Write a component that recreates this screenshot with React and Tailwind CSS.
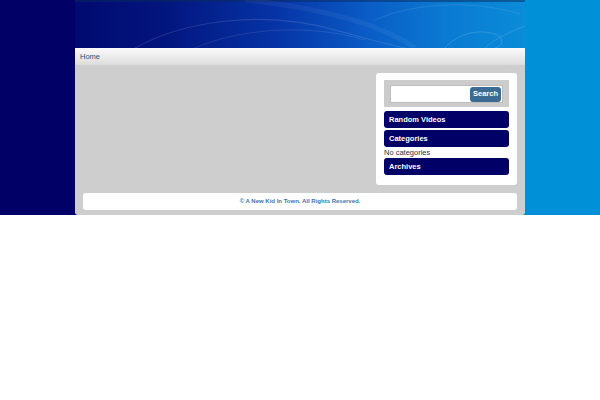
export default function App() {
  return (
    <div className="min-h-screen bg-white font-['Liberation_Sans',Arial,sans-serif]">
      <div className="flex bg-[linear-gradient(to_right,#000066_50%,#0090d8_50%)]">
        <div className="flex-1" />
        <div className="w-[450px] flex flex-col">
          {/* header banner */}
          <header className="relative h-[48px] overflow-hidden bg-[linear-gradient(to_right,#000a70_0%,#03157e_20%,#0634a6_45%,#0a5cc6_65%,#0a7ad2_82%,#0a8cd8_100%)]">
            <div className="absolute inset-x-0 top-0 h-[2px] bg-[#0a2a5a] opacity-50" />
            <svg className="absolute inset-0" width="450" height="48" viewBox="0 0 450 48" fill="none">
              <path d="M60 48 C110 20 190 10 260 30 C290 38 310 44 330 48" stroke="#ffffff" strokeOpacity="0.12" strokeWidth="1.2" />
              <path d="M120 48 C160 30 230 22 290 40" stroke="#ffffff" strokeOpacity="0.1" strokeWidth="1" />
              <path d="M170 0 C230 6 300 20 340 48" stroke="#ffffff" strokeOpacity="0.05" strokeWidth="5" />
              <path d="M300 20 C340 2 400 0 445 14" stroke="#ffffff" strokeOpacity="0.1" strokeWidth="1" />
              <path d="M370 48 C380 36 400 28 420 34 C430 38 428 46 420 48" stroke="#ffffff" strokeOpacity="0.15" strokeWidth="1" />
              <path d="M410 48 C420 38 440 30 450 26" stroke="#ffffff" strokeOpacity="0.12" strokeWidth="1" />
            </svg>
          </header>

          {/* nav */}
          <nav className="h-[17px] flex items-center px-[5px] bg-gradient-to-b from-[#fbfbfb] to-[#dcdcdc] text-[7.5px] text-[#2a4f78]">
            Home
          </nav>

          {/* content */}
          <div className="bg-[#cecece] rounded-b-[3px] px-2 pt-2 pb-[5px]">
            <div className="flex">
              <main className="flex-1" />
              <aside className="w-[141px] bg-white rounded-[3px] px-2 pt-[7px] pb-[10px]">
                <div className="h-[27px] bg-[#cccccc] pl-[6px] pr-[6px] pt-[5px]">
                  <div className="h-[18px] flex items-center bg-white border border-[#bdbdbd] pr-px">
                    <div className="flex-1" />
                    <button className="h-[15px] w-[31px] rounded-[3px] bg-[#3b6a92] text-white font-bold text-[7.5px] leading-none">
                      Search
                    </button>
                  </div>
                </div>
                <div className="mt-1 h-[17px] flex items-center pl-[5px] rounded-[3px] bg-[#000066] text-white font-bold text-[7.5px]">
                  Random Videos
                </div>
                <div className="mt-[2px] h-[17px] flex items-center pl-[5px] rounded-[3px] bg-[#000066] text-white font-bold text-[7.5px]">
                  Categories
                </div>
                <div className="h-[11px] flex items-center text-[7.5px] text-[#333]">No categories</div>
                <div className="h-[17px] flex items-center pl-[5px] rounded-[3px] bg-[#000066] text-white font-bold text-[7.5px]">
                  Archives
                </div>
              </aside>
            </div>
            <footer className="mt-2 h-[17px] flex items-center justify-center rounded-[3px] bg-white text-[6px] font-bold text-[#3a76b3]">
              © A New Kid In Town. All Rights Reserved.
            </footer>
          </div>
        </div>
        <div className="flex-1" />
      </div>
    </div>
  );
}
